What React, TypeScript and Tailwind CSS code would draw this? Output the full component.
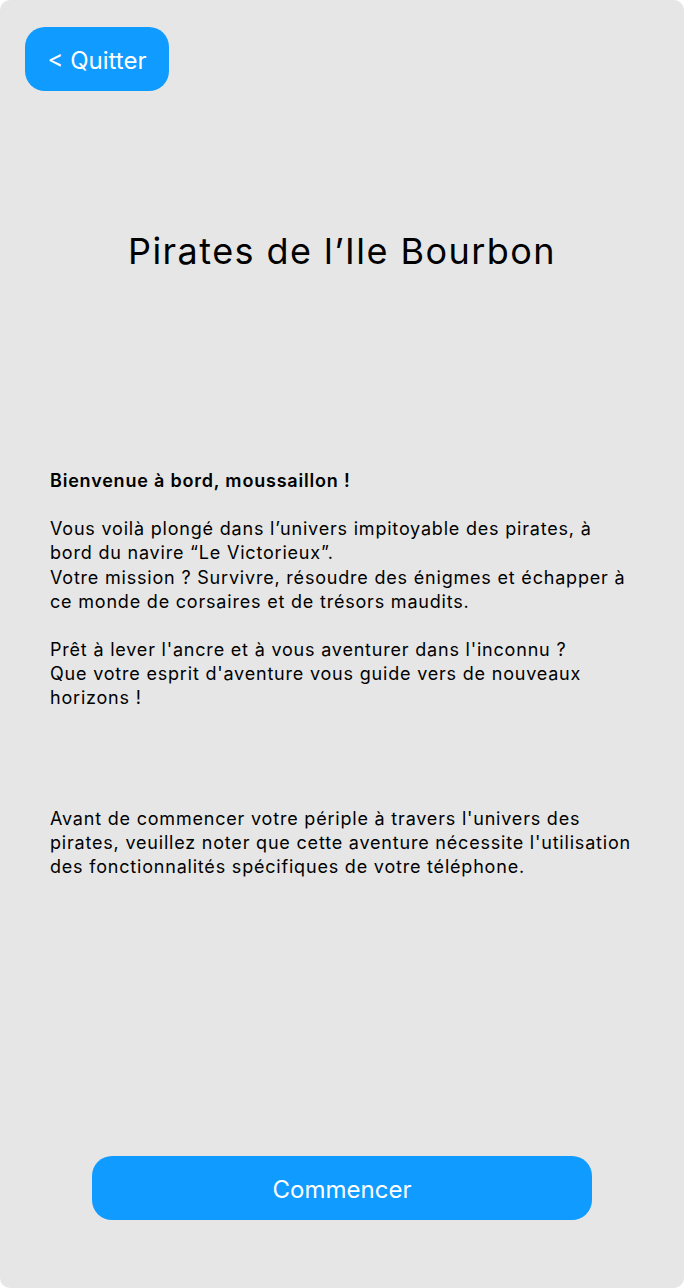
import React from 'react';

const App: React.FC = () => {
    const handleQuit = () => {};
    const handleStart = () => {};

    return (
        <div className="w-full h-screen bg-white font-['Inter',sans-serif]">
            <div className="flex flex-col h-full bg-[#e6e6e6] rounded-[10px] overflow-hidden">
                {/* Header */}
                <div className="pt-[27px] pl-[25px]">
                    <button
                        onClick={handleQuit}
                        className="w-[144px] h-[64px] pt-[3px] rounded-[20px] bg-[#0f9bff] text-white text-[24px] flex items-center justify-center"
                    >
                        &lt; Quitter
                    </button>
                </div>

                <h1 className="mt-[138px] text-center text-black text-[36px] leading-[44px] tracking-[1.45px]">
                    Pirates de l’Ile Bourbon
                </h1>

                {/* Intro text */}
                <div className="mt-[196px] px-[50px] text-black text-[18px] leading-[24.2px] tracking-[0.8px]">
                    <p className="font-semibold">Bienvenue à bord, moussaillon !</p>
                    <p className="mt-[24px]">
                        Vous voilà plongé dans l’univers impitoyable des pirates, à bord du navire “Le Victorieux”.
                        <br />
                        Votre mission ? Survivre, résoudre des énigmes et échapper à ce monde de corsaires et de trésors maudits.
                    </p>
                    <p className="mt-[24px]">
                        Prêt à lever l'ancre et à vous aventurer dans l'inconnu ?
                        <br />
                        Que votre esprit d'aventure vous guide vers de nouveaux horizons !
                    </p>
                    <p className="mt-[96px]">
                        Avant de commencer votre périple à travers l'univers des pirates, veuillez noter que cette aventure nécessite l'utilisation des fonctionnalités spécifiques de votre téléphone.
                    </p>
                </div>

                {/* Footer */}
                <div className="mt-auto pb-[68px] flex justify-center">
                    <button
                        onClick={handleStart}
                        className="w-[500px] h-[64px] pt-[3px] rounded-[20px] bg-[#0f9bff] text-white text-[24px] flex items-center justify-center"
                    >
                        Commencer
                    </button>
                </div>
            </div>
        </div>
    );
};

export default App;
